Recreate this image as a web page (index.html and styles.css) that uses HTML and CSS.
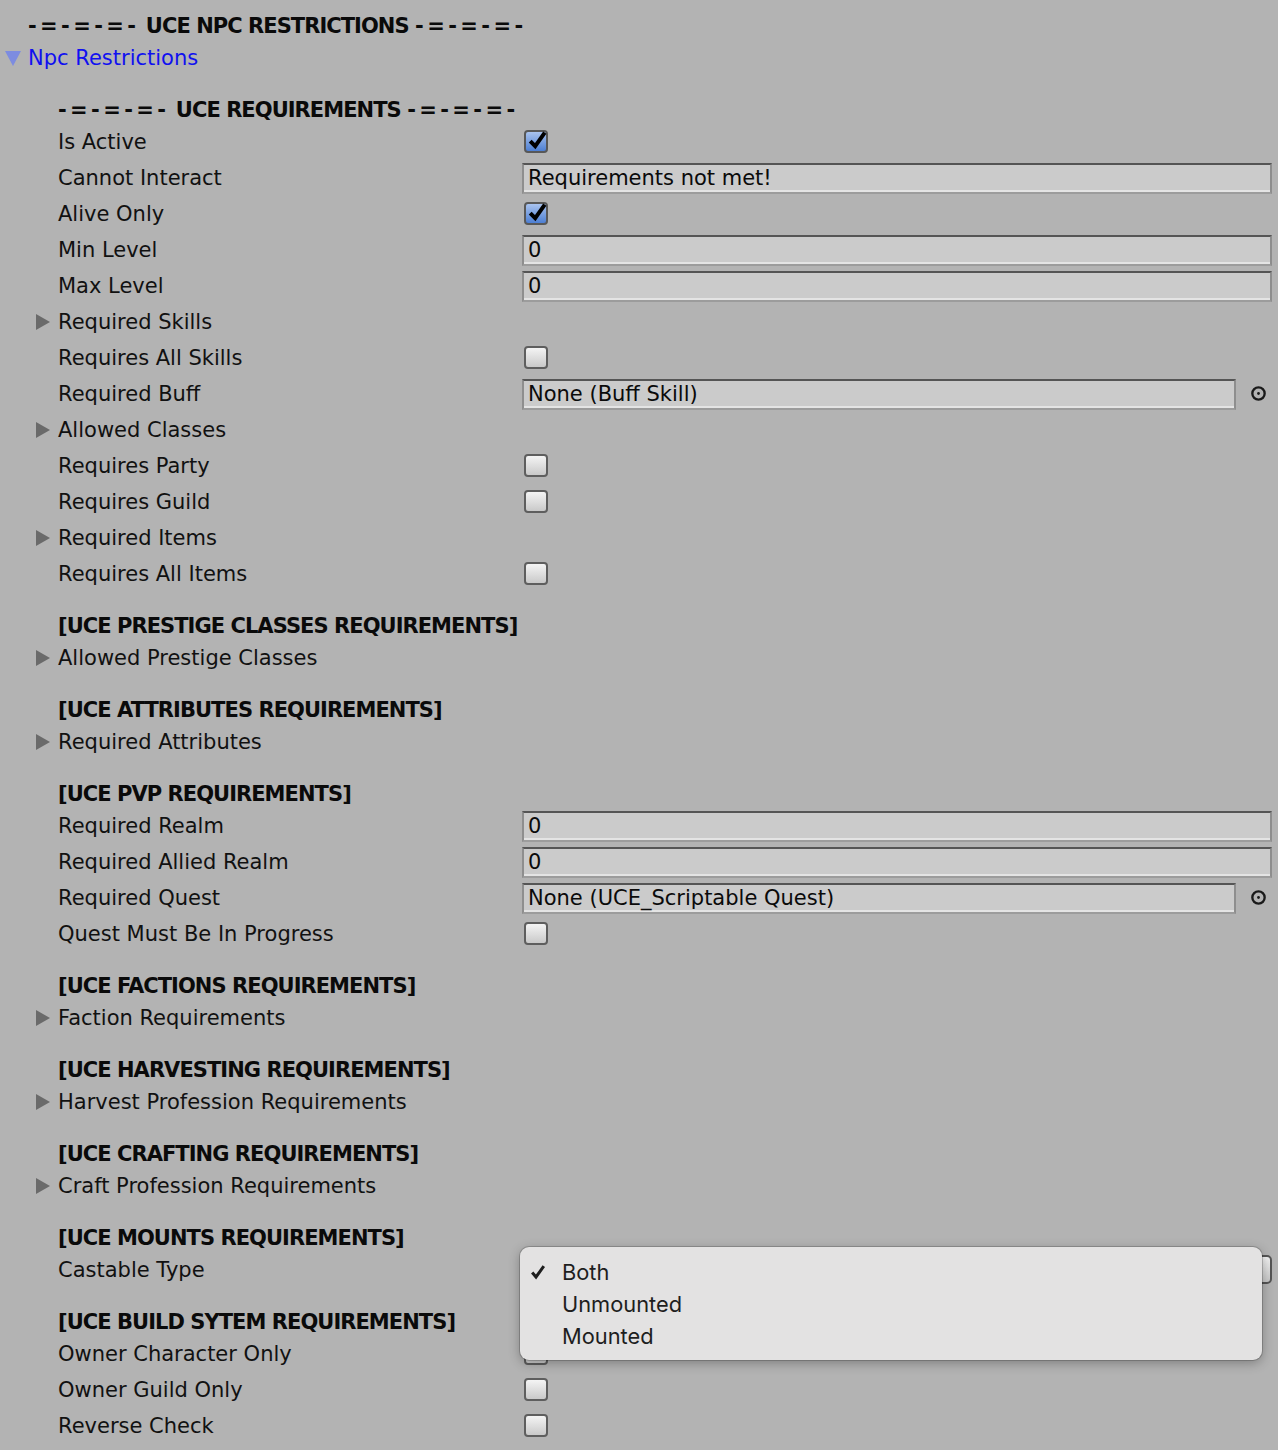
FILE: index.html
```html
<!DOCTYPE html>
<html>
<head>
<meta charset="utf-8">
<link rel="stylesheet" href="styles.css">
</head>
<body>
<div class="inspector">
  <div class="header top"><span class="dash">-=-=-=-</span> UCE NPC RESTRICTIONS <span class="dash">-=-=-=-</span></div>
  <div class="row"><div class="label root-fold">Npc Restrictions</div></div>

  <div class="header"><span class="dash">-=-=-=-</span> UCE REQUIREMENTS <span class="dash">-=-=-=-</span></div>
  <div class="row"><div class="label">Is Active</div><div class="value"><span class="check on"><svg viewBox="0 0 24 24"><path d="M5 12.5 L9.8 17.5 L19 4.5"/></svg></span></div></div>
  <div class="row"><div class="label">Cannot Interact</div><div class="value"><div class="field">Requirements not met!</div></div></div>
  <div class="row"><div class="label">Alive Only</div><div class="value"><span class="check on"><svg viewBox="0 0 24 24"><path d="M5 12.5 L9.8 17.5 L19 4.5"/></svg></span></div></div>
  <div class="row"><div class="label">Min Level</div><div class="value"><div class="field">0</div></div></div>
  <div class="row"><div class="label">Max Level</div><div class="value"><div class="field">0</div></div></div>
  <div class="row"><div class="label fold">Required Skills</div></div>
  <div class="row"><div class="label">Requires All Skills</div><div class="value"><span class="check"></span></div></div>
  <div class="row"><div class="label">Required Buff</div><div class="value obj"><div class="field">None (Buff Skill)</div><span class="picker"><svg viewBox="0 0 16 16"><circle cx="8" cy="8" r="5.8"/><circle class="dot" cx="8" cy="8" r="1.3"/></svg></span></div></div>
  <div class="row"><div class="label fold">Allowed Classes</div></div>
  <div class="row"><div class="label">Requires Party</div><div class="value"><span class="check"></span></div></div>
  <div class="row"><div class="label">Requires Guild</div><div class="value"><span class="check"></span></div></div>
  <div class="row"><div class="label fold">Required Items</div></div>
  <div class="row"><div class="label">Requires All Items</div><div class="value"><span class="check"></span></div></div>

  <div class="header">[UCE PRESTIGE CLASSES REQUIREMENTS]</div>
  <div class="row"><div class="label fold">Allowed Prestige Classes</div></div>

  <div class="header">[UCE ATTRIBUTES REQUIREMENTS]</div>
  <div class="row"><div class="label fold">Required Attributes</div></div>

  <div class="header">[UCE PVP REQUIREMENTS]</div>
  <div class="row"><div class="label">Required Realm</div><div class="value"><div class="field">0</div></div></div>
  <div class="row"><div class="label">Required Allied Realm</div><div class="value"><div class="field">0</div></div></div>
  <div class="row"><div class="label">Required Quest</div><div class="value obj"><div class="field">None (UCE_Scriptable Quest)</div><span class="picker"><svg viewBox="0 0 16 16"><circle cx="8" cy="8" r="5.8"/><circle class="dot" cx="8" cy="8" r="1.3"/></svg></span></div></div>
  <div class="row"><div class="label">Quest Must Be In Progress</div><div class="value"><span class="check"></span></div></div>

  <div class="header">[UCE FACTIONS REQUIREMENTS]</div>
  <div class="row"><div class="label fold">Faction Requirements</div></div>

  <div class="header">[UCE HARVESTING REQUIREMENTS]</div>
  <div class="row"><div class="label fold">Harvest Profession Requirements</div></div>

  <div class="header">[UCE CRAFTING REQUIREMENTS]</div>
  <div class="row"><div class="label fold">Craft Profession Requirements</div></div>

  <div class="header">[UCE MOUNTS REQUIREMENTS]</div>
  <div class="row"><div class="label">Castable Type</div>
    <div class="value popup-host">
      <div class="popup-btn"></div>
      <div class="menu">
        <div class="item"><span class="tick"><svg viewBox="0 0 16 16"><path d="M2.2 8.6 L6 13 L13.8 2.2"/></svg></span>Both</div>
        <div class="item"><span class="tick"></span>Unmounted</div>
        <div class="item"><span class="tick"></span>Mounted</div>
      </div>
    </div>
  </div>

  <div class="header">[UCE BUILD SYTEM REQUIREMENTS]</div>
  <div class="row"><div class="label">Owner Character Only</div><div class="value"><span class="check"></span></div></div>
  <div class="row"><div class="label">Owner Guild Only</div><div class="value"><span class="check"></span></div></div>
  <div class="row"><div class="label">Reverse Check</div><div class="value"><span class="check"></span></div></div>
</div>
</body>
</html>
```

FILE: styles.css
```css
html, body {
  margin: 0;
  padding: 0;
  background: #b3b3b3;
}
body {
  font-family: "DejaVu Sans", "Liberation Sans", sans-serif;
  font-size: 21px;
  color: #111;
  width: 1278px;
  height: 1450px;
  overflow: hidden;
}
.inspector {
  display: flex;
  flex-direction: column;
  padding-right: 6px;
}
.header {
  padding-top: 22px;
  height: 26px;
  line-height: 26px;
  padding-left: 58px;
  font-weight: bold;
  letter-spacing: -0.95px;
  color: #0a0a0a;
  white-space: nowrap;
}
.header .dash {
  letter-spacing: 3.4px;
}
.header.top {
  padding-top: 13px;
  padding-left: 28px;
}
.row {
  display: grid;
  grid-template-columns: 522px 1fr;
  height: 36px;
  align-items: center;
}
.label {
  padding-left: 58px;
  padding-top: 2px;
  white-space: nowrap;
  line-height: 34px;
  display: flex;
  align-items: center;
}
.label.fold {
  padding-left: 36px;
}
.label.fold::before {
  content: "";
  width: 0;
  height: 0;
  border-top: 8px solid transparent;
  border-bottom: 8px solid transparent;
  border-left: 14px solid #6a6a6a;
  margin-right: 8px;
}
.label.root-fold {
  padding-left: 5px;
  color: #1010f0;
}
.label.root-fold::before {
  content: "";
  width: 0;
  height: 0;
  border-left: 8px solid transparent;
  border-right: 8px solid transparent;
  border-top: 15px solid #7d8ce0;
  margin-right: 7px;
  margin-top: 1px;
}
.value {
  display: flex;
  align-items: center;
  height: 36px;
}
.field {
  flex: 1;
  box-sizing: border-box;
  height: 31px;
  margin-top: 2px;
  background: #cbcbcb;
  border-top: 2px solid #555;
  border-left: 2px solid #8e8e8e;
  border-right: 2px solid #8e8e8e;
  border-bottom: 2px solid #9c9c9c;
  box-shadow: inset 0 -2px 0 #e4e4e4;
  padding-left: 4px;
  padding-top: 1px;
  line-height: 25px;
  white-space: nowrap;
  overflow: hidden;
  color: #0a0a0a;
}
.picker {
  width: 36px;
  box-sizing: border-box;
  padding-left: 9px;
  display: flex;
  justify-content: center;
  align-items: center;
  margin-top: 1px;
}
.picker svg {
  width: 17px;
  height: 17px;
}
.picker circle {
  fill: none;
  stroke: #1a1a1a;
  stroke-width: 2.2;
}
.picker circle.dot {
  fill: #1a1a1a;
  stroke: none;
}
.check {
  box-sizing: border-box;
  width: 24px;
  height: 23px;
  margin-left: 2px;
  margin-top: 1px;
  border: 2px solid #5e5e5e;
  border-radius: 4px;
  background: linear-gradient(#f4f4f4, #c9c9c9);
  display: flex;
  align-items: center;
  justify-content: center;
  overflow: visible;
}
.check.on {
  background: linear-gradient(#a9c3ee, #4d7fd3);
  border-color: #585858;
}
.check svg {
  flex: none;
  width: 25px;
  height: 25px;
  margin-top: -3px;
  margin-left: 3px;
}
.check svg path {
  fill: none;
  stroke: #000;
  stroke-width: 3.8;
  stroke-linecap: butt;
  stroke-linejoin: miter;
}
.popup-host {
  position: relative;
}
.popup-btn {
  flex: 1;
  box-sizing: border-box;
  height: 29px;
  margin-top: 1px;
  border: 2px solid #555;
  border-radius: 5px;
  background: linear-gradient(#f2f2f2, #c6c6c6);
}
.menu {
  position: absolute;
  left: -2px;
  top: -4px;
  width: 742px;
  height: 113px;
  box-sizing: border-box;
  background: #e3e2e2;
  border-radius: 9px;
  box-shadow: 0 0 0 1px rgba(0,0,0,0.18), 0 3px 12px rgba(0,0,0,0.3);
  padding-top: 9px;
  font-family: "Inter", "Noto Sans", sans-serif;
  font-size: 21.8px;
  color: #1e1e1e;
  display: flex;
  flex-direction: column;
}
.item {
  height: 32px;
  line-height: 32px;
  display: flex;
  align-items: center;
  white-space: nowrap;
}
.tick {
  width: 42px;
  padding-left: 10px;
  box-sizing: border-box;
  display: flex;
  align-items: center;
}
.tick svg {
  width: 16px;
  height: 18px;
}
.tick svg path {
  fill: none;
  stroke: #1e1e1e;
  stroke-width: 3;
}
```
